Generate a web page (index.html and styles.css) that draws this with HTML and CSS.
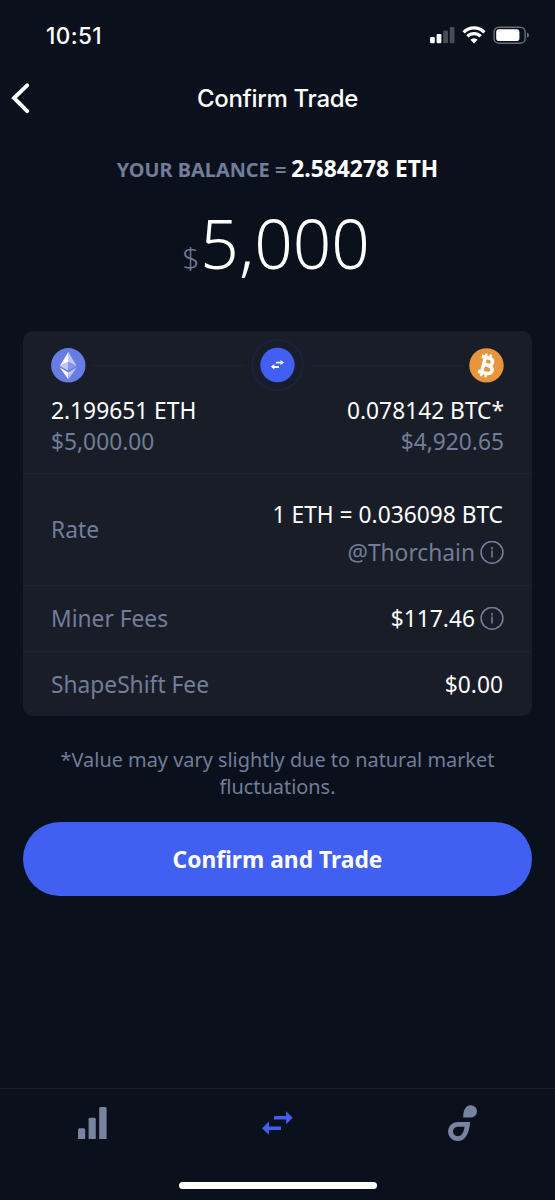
FILE: index.html
```html
<!DOCTYPE html>
<html lang="en">
<head>
    <meta charset="UTF-8">
    <meta name="viewport" content="width=device-width, initial-scale=1.0">
    <title>Confirm Trade</title>
    <link rel="stylesheet" href="styles.css">
</head>
<body>

    <div class="status-bar">
        <span class="time">10:51</span>
        <svg class="status-icons" width="100" height="20" viewBox="0 0 100 20">
            <!-- signal -->
            <g fill="#fff">
                <rect x="0" y="12" width="4.8" height="6.2" rx="1.2"/>
                <rect x="6.6" y="9" width="4.8" height="9.2" rx="1.2"/>
                <rect x="13.2" y="5.4" width="4.8" height="12.8" rx="1.2" opacity=".25"/>
                <rect x="19.7" y="2" width="4.8" height="16.2" rx="1.2" opacity=".25"/>
            </g>
            <!-- wifi -->
            <g fill="none" stroke="#fff" stroke-width="3.3">
                <path d="M33.6 7.4a14.4 14.4 0 0 1 20.8 0"/>
                <path d="M37.4 11.4a9.2 9.2 0 0 1 13.2 0"/>
            </g>
            <path d="M44 18.4l-3.6-3.7a5 5 0 0 1 7.2 0z" fill="#fff"/>
            <!-- battery -->
            <rect x="64.1" y="2.2" width="31" height="16" rx="4.8" fill="none" stroke="#696d75" stroke-width="1.4"/>
            <rect x="66.2" y="4.3" width="23.2" height="11.8" rx="2.8" fill="#fff"/>
            <path d="M97 7.6q2 .8 2 2.6t-2 2.6z" fill="#696d75"/>
        </svg>
    </div>

    <div class="header">
        <svg class="back" width="24" height="34" viewBox="0 0 24 34">
            <path d="M18.2 4.4L5 17l13.2 13.2" fill="none" stroke="#fff" stroke-width="4" stroke-linecap="round" stroke-linejoin="miter"/>
        </svg>
        <h1>Confirm Trade</h1>
    </div>

    <div class="balance">
        <span class="balance-label">YOUR BALANCE =</span>
        <strong>2.584278 ETH</strong>
    </div>

    <div class="amount"><span class="currency">$</span><span>5,000</span></div>

    <div class="card">
        <div class="trade">
            <div class="trade-icons">
                <svg width="35" height="35" viewBox="0 0 35 35">
                    <circle cx="17.3" cy="17.3" r="17.2" fill="#687de3"/>
                    <path d="M17.3 4v9.9l8.3 4z" fill="#bec8f5"/>
                    <path d="M17.3 4L8.8 17.9l8.5-4z" fill="#fff"/>
                    <path d="M17.3 13.9L8.8 17.9l8.5 4.9z" fill="#bec8f5"/>
                    <path d="M17.3 13.9v8.9l8.3-4.9z" fill="#8796e8"/>
                    <path d="M8.8 19.6l8.5 5v6.6z" fill="#fff"/>
                    <path d="M25.6 19.6l-8.3 5v6.6z" fill="#bec8f5"/>
                </svg>
                <span class="line"></span>
                <svg width="54" height="54" viewBox="0 0 54 54">
                    <circle cx="26.5" cy="27" r="25.2" fill="none" stroke="#1b2142" stroke-width="1.6"/>
                    <circle cx="26.5" cy="27" r="20.4" fill="#191d30"/>
                    <circle cx="26.5" cy="27" r="17.2" fill="#415ff0"/>
                    <g transform="translate(19.9 21.9)" fill="#fff">
                        <path d="M5 1.8h4.7V0L13 2.7 9.7 5.4V3.7H5z"/>
                        <path d="M8 6.1H3.4V4.2L0 6.9l3.4 2.7V8H8z"/>
                    </g>
                </svg>
                <span class="line"></span>
                <svg width="35" height="35" viewBox="0 0 35 35">
                    <circle cx="17.5" cy="17.4" r="17.2" fill="#e8963e"/>
                    <g transform="rotate(14 17.5 17.5)" fill="none" stroke="#fff">
                        <path d="M14.4 9.2v16.6M10.8 9.7h8.2a3.6 3.6 0 0 1 0 7.2h-4.7M19 17.1h1a4.1 4 0 0 1 0 8h-9.2" stroke-width="3.5"/>
                        <path d="M14.7 5.8v3.6M19.2 5.8v3.6M14.7 25.5v3.7M19.2 25.5v3.7" stroke-width="2.4"/>
                    </g>
                </svg>
            </div>
            <div class="trade-values">
                <div>
                    <p>2.199651 ETH</p>
                    <p class="muted">$5,000.00</p>
                </div>
                <div class="right">
                    <p>0.078142 BTC*</p>
                    <p class="muted">$4,920.65</p>
                </div>
            </div>
        </div>

        <div class="row rate">
            <span class="muted">Rate</span>
            <div class="right">
                <p>1 ETH = 0.036098 BTC</p>
                <p class="muted with-info">@Thorchain
                    <svg class="info" width="24" height="24" viewBox="0 0 24 24">
                        <circle cx="12" cy="11.3" r="10.9"/>
                        <path d="M12 9.6v6.8M12 6.1v2.3"/>
                    </svg>
                </p>
            </div>
        </div>

        <div class="row">
            <span class="muted">Miner Fees</span>
            <p class="with-info">$117.46
                <svg class="info" width="24" height="24" viewBox="0 0 24 24">
                    <circle cx="12" cy="11.3" r="10.9"/>
                    <path d="M12 9.6v6.8M12 6.1v2.3"/>
                </svg>
            </p>
        </div>

        <div class="row">
            <span class="muted">ShapeShift Fee</span>
            <p>$0.00</p>
        </div>
    </div>

    <p class="note">*Value may vary slightly due to natural market fluctuations.</p>

    <button class="confirm">Confirm and Trade</button>

    <div class="tab-bar">
        <div class="tabs">
            <svg width="36" height="36" viewBox="0 0 36 36" fill="#77839f">
                <path d="M3 34V24.8q0-1.5 1.5-1.5h4.2q1.5 0 1.5 1.5V34z"/>
                <path d="M13.6 34V14.3q0-1.5 1.5-1.5h4.2q1.5 0 1.5 1.5V34z"/>
                <path d="M24.2 34V3.4q0-1.4 1.5-1.4h4.4q1.5 0 1.5 1.4V34z"/>
            </svg>
            <svg width="36" height="36" viewBox="0 0 36 36" fill="#415ff0">
                <path d="M14.1 11h12V6.2l6.6 6.5-6.6 6.6v-4.8h-12z"/>
                <path d="M21 21.5H9v-4.9l-7 6.6 7 6.5v-4.8h12z"/>
            </svg>
            <svg width="36" height="36" viewBox="0 0 36 36" fill="#77839f">
                <path d="M18.2 12.5V12C18.2 5 20.6.2 25.8.2a6.2 6.15 0 0 1 0 12.3z"/>
                <path fill-rule="evenodd" d="M25.2 17c-.9 11.4-4.8 19-12.4 19-5.6 0-9.7-4.2-9.7-9.4S7.200 17 12.8 17zM19.500 21.800h-6.300c-3.300 0-5.200 2.200-5.200 4.800s2 4.600 4.700 4.600c4 0 6.200-3.800 6.800-9.400z"/>
            </svg>
        </div>
        <div class="home-indicator"></div>
    </div>

</body>
</html>
```

FILE: styles.css
```css
* {
    box-sizing: border-box;
}

body {
    font-family: "Noto Sans", "Open Sans", sans-serif;
    background-color: #0b111c;
    color: #fff;
    display: flex;
    flex-direction: column;
    margin: 0;
    height: 1200px;
    overflow: hidden;
}

p {
    margin: 0;
}

svg {
    display: block;
    flex-shrink: 0;
}

.status-bar {
    display: flex;
    justify-content: space-between;
    align-items: center;
    height: 70px;
    padding: 0 25px 0 46px;
}

.time {
    font-family: Inter, sans-serif;
    font-size: 22.5px;
    font-weight: 500;
    letter-spacing: 0.4px;
}

.header {
    display: grid;
    grid-template-columns: 40px 1fr 40px;
    align-items: center;
    height: 56px;
    padding: 0 9px;
}

h1 {
    font-family: Inter, sans-serif;
    font-size: 24px;
    font-weight: 500;
    letter-spacing: -0.3px;
    text-align: center;
    margin: 0;
}

.balance {
    display: flex;
    justify-content: center;
    align-items: baseline;
    gap: 5px;
    height: 34px;
    margin-top: 26px;
    line-height: 34px;
    font-size: 22.8px;
}

.balance-label {
    font-size: 19.9px;
    font-weight: 700;
    color: #717d9a;
}

.amount {
    display: flex;
    justify-content: center;
    align-items: baseline;
    gap: 1px;
    height: 92px;
    margin-top: 11px;
    padding-right: 3px;
    line-height: 92px;
    font-size: 67.5px;
    font-weight: 300;
}

.currency {
    font-size: 30px;
    color: #717d9a;
}

.card {
    background-color: #191d27;
    border-radius: 10px;
    margin: 42px 23px 0;
    height: 385px;
    font-size: 22.75px;
}

.trade {
    height: 142px;
    padding: 7px 28px 0;
}

.trade-icons {
    display: flex;
    align-items: center;
    justify-content: space-between;
}

.line {
    width: 153px;
    height: 1px;
    background-color: #1e232f;
}

.trade-values {
    display: flex;
    justify-content: space-between;
    line-height: 31px;
    margin-top: 3px;
}

.row {
    display: flex;
    justify-content: space-between;
    align-items: center;
    height: 66px;
    padding: 0 29px 0 28px;
    border-top: 1px solid #1e222d;
}

.rate {
    height: 112px;
    line-height: 38px;
}

.rate .right {
    padding-top: 8px;
}

.right {
    text-align: right;
}

.muted {
    color: #717d9a;
}

.with-info {
    display: flex;
    justify-content: flex-end;
    align-items: center;
    gap: 5px;
}

.info {
    margin-right: -1px;
    fill: none;
    stroke: #717d9a;
    stroke-width: 1.6;
}

.note {
    color: #717d9a;
    font-size: 19.9px;
    line-height: 27px;
    text-align: center;
    margin: 30px 50px 0;
}

.confirm {
    background-color: #415ff0;
    color: #fff;
    border: none;
    border-radius: 37px;
    height: 74px;
    margin: 22px 23px 0;
    font-family: inherit;
    font-size: 22.8px;
    font-weight: 700;
    cursor: pointer;
}

.tab-bar {
    margin-top: auto;
    height: 112px;
    border-top: 1px solid #171f2b;
}

.tabs {
    display: grid;
    grid-template-columns: repeat(3, 1fr);
    justify-items: center;
    padding-top: 16px;
}

.home-indicator {
    width: 198px;
    height: 7px;
    margin: 41px auto 0;
    border-radius: 4px;
    background-color: #fff;
}
```
